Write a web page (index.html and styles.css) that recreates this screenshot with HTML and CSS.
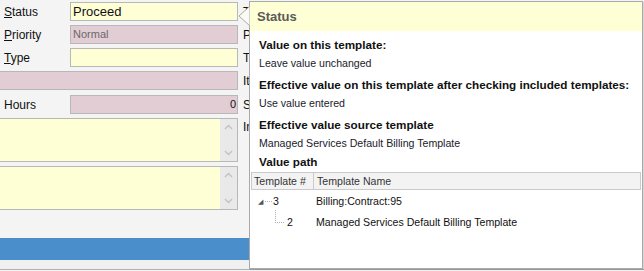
FILE: index.html
```html
<!DOCTYPE html>
<html lang="en">
<head>
  <meta charset="UTF-8">
  <title>Ticket template</title>
  <link rel="stylesheet" href="styles.css">
</head>
<body>

<div class="page">
  <div class="form">
    <div class="row">
      <span class="label"><u>S</u>tatus</span>
      <div class="field yellow big">Proceed</div>
      <span class="side">T</span>
    </div>
    <div class="row">
      <span class="label"><u>P</u>riority</span>
      <div class="field pink grey-text">Normal</div>
      <span class="side">P</span>
    </div>
    <div class="row">
      <span class="label"><u>T</u>ype</span>
      <div class="field yellow"></div>
      <span class="side">T</span>
    </div>
    <div class="row">
      <div class="field pink wide"></div>
      <span class="side">It</span>
    </div>
    <div class="row hours">
      <span class="label">Hours</span>
      <div class="field pink num">0</div>
      <span class="side">S</span>
    </div>

    <div class="row area-row">
      <div class="area">
        <div class="scroll">
          <svg width="9" height="6" viewBox="0 0 9 6"><polyline points="1,5 4.5,1.5 8,5" fill="none" stroke="#c2c2c2" stroke-width="1.4"/></svg>
          <svg width="9" height="6" viewBox="0 0 9 6"><polyline points="1,1 4.5,4.5 8,1" fill="none" stroke="#c2c2c2" stroke-width="1.4"/></svg>
        </div>
      </div>
      <span class="side top">In</span>
    </div>
    <div class="row area-row">
      <div class="area">
        <div class="scroll">
          <svg width="9" height="6" viewBox="0 0 9 6"><polyline points="1,5 4.5,1.5 8,5" fill="none" stroke="#c2c2c2" stroke-width="1.4"/></svg>
          <svg width="9" height="6" viewBox="0 0 9 6"><polyline points="1,1 4.5,4.5 8,1" fill="none" stroke="#c2c2c2" stroke-width="1.4"/></svg>
        </div>
      </div>
    </div>
  </div>

  <div class="bluebar"></div>
  <div class="footer"></div>

  <div class="tip">
    <svg class="tip-arrow" width="11" height="22" viewBox="0 0 11 22">
      <polygon points="11,0 0,10 11,20" fill="#fbfbf6" stroke="#a9a9a9" stroke-width="1"/>
    </svg>
    <div class="tip-head">Status</div>
    <div class="tip-body">
      <h4>Value on this template:</h4>
      <p>Leave value unchanged</p>
      <h4>Effective value on this template after checking included templates:</h4>
      <p>Use value entered</p>
      <h4>Effective value source template</h4>
      <p class="last">Managed Services Default Billing Template</p>
      <h4>Value path</h4>

      <div class="grid">
        <div class="grid-head">
          <div class="col-num">Template #</div>
          <div class="col-name">Template Name</div>
        </div>
        <div class="grid-row first">
          <div class="col-num"><span class="tri">&#9698;</span><span class="dots"></span>3</div>
          <div class="col-name">Billing:Contract:95</div>
        </div>
        <div class="grid-row">
          <div class="col-num child"><span class="elbow"></span>2</div>
          <div class="col-name">Managed Services Default Billing Template</div>
        </div>
      </div>
    </div>
  </div>
</div>

</body>
</html>
```

FILE: styles.css
```css
body {
  margin: 0;
  font-family: "Liberation Sans", Arial, sans-serif;
  font-size: 11px;
  color: #111;
}

.page {
  position: relative;
  width: 644px;
  height: 271px;
  background-color: #f4f4f4;
  overflow: hidden;
}

.form {
  display: flex;
  flex-direction: column;
  gap: 4px;
  padding-top: 2px;
}

.row {
  display: flex;
  align-items: center;
  height: 19px;
}

.hours {
  margin-top: 1px;
}

.label {
  width: 66px;
  padding-left: 4px;
  font-size: 12px;
}

.field {
  box-sizing: border-box;
  width: 168px;
  height: 19px;
  border: 1px solid #b8b8b8;
  padding: 0 2px;
  line-height: 17px;
  font-size: 11px;
}

.field.wide {
  width: 238px;
  border-left: none;
}

.yellow {
  background-color: #ffffd6;
}

.pink {
  background-color: #e2cdd5;
}

.big {
  font-size: 13px;
}

.grey-text {
  color: #6a6a6a;
}

.num {
  text-align: right;
  padding-right: 1px;
}

.side {
  padding-left: 5px;
  font-size: 12px;
}

.side.top {
  align-self: flex-start;
  margin-top: 2px;
}

.area-row {
  height: 44px;
  align-items: stretch;
}

.area {
  box-sizing: border-box;
  width: 238px;
  height: 44px;
  border: 1px solid #b8b8b8;
  border-left: none;
  background-color: #ffffd6;
  display: flex;
  justify-content: flex-end;
}

.scroll {
  width: 17px;
  background-color: #e9e9e9;
  display: flex;
  flex-direction: column;
  justify-content: space-between;
  align-items: center;
  padding: 5px 0;
  box-sizing: border-box;
}

.scroll svg {
  display: block;
}

.bluebar {
  margin-top: 28px;
  width: 249px;
  height: 22px;
  background-color: #4a8fcb;
}

.footer {
  height: 9px;
  background-color: #f0f0f0;
  border-bottom: 1px solid #b0b0b0;
}

/* popup that sits over the form */
.tip {
  position: absolute;
  left: 249px;
  top: 1px;
  box-sizing: border-box;
  width: 394px;
  height: 268px;
  background-color: #fff;
  border: 1px solid #a9a9a9;
  box-shadow: 1px 1px 1px rgba(0, 0, 0, 0.12);
}

.tip-arrow {
  position: absolute;
  left: -11px;
  top: 4px;
}

.tip-head {
  height: 29px;
  background-color: #ffffd6;
  padding-left: 7px;
  line-height: 29px;
  font-size: 13px;
  font-weight: bold;
  color: #5a5a5a;
}

.tip-body {
  padding: 5px 0 0 9px;
}

h4 {
  margin: 0;
  font-size: 11.7px;
  line-height: 18px;
  font-weight: bold;
  color: #111;
}

p {
  margin: 0 0 4px 0;
  line-height: 18px;
  font-size: 10.6px;
  color: #1a1a2a;
}

p.last {
  margin-bottom: 1px;
}

.grid {
  margin: 1px 0 0 -8px;
  width: 390px;
  font-size: 10.6px;
}

.grid-head {
  display: flex;
  height: 18px;
  box-sizing: border-box;
  border: 1px solid #cacaca;
  background-color: #f3f3f3;
  line-height: 16px;
  color: #333;
}

.grid-head .col-num {
  border-right: 1px solid #cacaca;
  padding-left: 2px;
}

.col-num {
  box-sizing: border-box;
  width: 62px;
}

.col-name {
  padding-left: 3px;
}

.grid-row {
  display: flex;
  height: 21px;
  line-height: 21px;
}

.grid-row.first {
  margin-top: 1px;
}

.grid-row .col-num {
  padding-left: 7px;
  display: flex;
  align-items: center;
}

.grid-row .col-name {
  padding-left: 3px;
}

.tri {
  font-size: 7px;
  color: #555;
  width: 7px;
}

.dots {
  width: 7px;
  border-top: 1px dotted #b0b0b0;
  margin-right: 1px;
}

.child {
  padding-left: 24px !important;
}

.elbow {
  width: 8px;
  height: 12px;
  margin-top: -12px;
  margin-right: 3px;
  border-left: 1px dotted #b0b0b0;
  border-bottom: 1px dotted #b0b0b0;
}
```
